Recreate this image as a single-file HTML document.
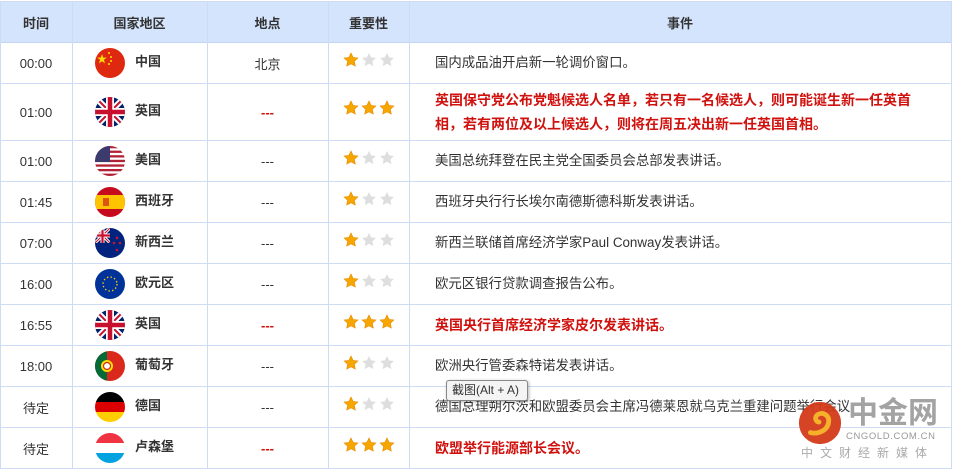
<!DOCTYPE html>
<html><head><meta charset="utf-8"><style>
*{margin:0;padding:0;box-sizing:border-box}
body{width:954px;height:469px;background:#fff;position:relative;overflow:hidden;font-family:"Liberation Sans","Noto Sans CJK SC",sans-serif;font-size:13px;color:#333}
.hd{position:absolute;left:0;top:1px;width:952px;height:42px;background:#d4e4fd;border-bottom:1px solid #c3d5f0}
.vl{position:absolute;top:1px;width:1px;height:468px;background:#cddcf3}
.hl{position:absolute;left:0;width:952px;height:1px;background:#cddcf3}
.c{position:absolute;display:flex;align-items:center;justify-content:center}
.th{font-weight:bold;color:#333}
.flag{position:absolute;left:95px;width:30px;height:30px;border-radius:50%;overflow:hidden}
.cn{position:absolute;left:135px;font-weight:bold;color:#333;line-height:16px}
.ev{position:absolute;left:435px;line-height:24px;color:#333;font-size:13.4px}
.red{color:#d0120f;font-weight:bold;font-size:14px}
.stars{position:absolute;left:343px}
.dash{color:#d0120f;font-weight:bold}
</style></head><body>
<div class="hd"></div>
<div class="vl" style="left:0"></div><div class="vl" style="left:72px"></div><div class="vl" style="left:207px"></div><div class="vl" style="left:328px"></div><div class="vl" style="left:409px"></div><div class="vl" style="left:951px"></div>
<div class="hl" style="top:1px"></div>
<div class="hl" style="top:83px"></div><div class="hl" style="top:140px"></div><div class="hl" style="top:181px"></div><div class="hl" style="top:222px"></div><div class="hl" style="top:263px"></div><div class="hl" style="top:304px"></div><div class="hl" style="top:345px"></div><div class="hl" style="top:386px"></div><div class="hl" style="top:427px"></div><div class="hl" style="top:468px"></div>

<div class="c th" style="left:0;width:72px;top:1px;height:42px">时间</div>
<div class="c th" style="left:72px;width:135px;top:1px;height:42px">国家地区</div>
<div class="c th" style="left:207px;width:121px;top:1px;height:42px">地点</div>
<div class="c th" style="left:328px;width:81px;top:1px;height:42px">重要性</div>
<div class="c th" style="left:409px;width:542px;top:1px;height:42px">事件</div>

<svg width="0" height="0" style="position:absolute"><defs>
<symbol id="sg" viewBox="0 0 16 16"><path d="M8 1l2.1 4.4 4.8.6-3.5 3.3.9 4.8L8 11.8 3.7 14.1l.9-4.8L1.1 6l4.8-.6z" fill="#f7a600" stroke="#e88a00" stroke-width=".6"/></symbol>
<symbol id="sw" viewBox="0 0 16 16"><path d="M8 1l2.1 4.4 4.8.6-3.5 3.3.9 4.8L8 11.8 3.7 14.1l.9-4.8L1.1 6l4.8-.6z" fill="#dedede"/></symbol>
<symbol id="uk" viewBox="0 0 30 30"><rect width="30" height="30" fill="#012169"/><path d="M0 0L30 30M30 0L0 30" stroke="#fff" stroke-width="6"/><path d="M0 0L30 30M30 0L0 30" stroke="#c8102e" stroke-width="2"/><path d="M15 0V30M0 15H30" stroke="#fff" stroke-width="8"/><path d="M15 0V30M0 15H30" stroke="#c8102e" stroke-width="4.5"/></symbol>
</defs></svg>

<div class="c" style="left:0;width:72px;top:43px;height:40px">00:00</div>
<svg class="flag" style="top:48px" viewBox="0 0 30 30"><rect width="30" height="30" fill="#de2910"/><path d="M7 6l1.2 3.6h3.7l-3 2.2 1.1 3.6L7 13.2l-3 2.2 1.1-3.6-3-2.2h3.7z" fill="#ffde00"/><circle cx="14" cy="5" r="1" fill="#ffde00"/><circle cx="16" cy="9" r="1" fill="#ffde00"/><circle cx="16" cy="13" r="1" fill="#ffde00"/><circle cx="14" cy="16" r="1" fill="#ffde00"/></svg>
<div class="cn" style="top:54px">中国</div>
<div class="c" style="left:207px;width:121px;top:43px;height:40px">北京</div>
<div class="stars" style="top:52px"><svg width="54" height="16"><use href="#sg" width="16" height="16"/><use href="#sw" x="18" width="16" height="16"/><use href="#sw" x="36" width="16" height="16"/></svg></div>
<div class="ev" style="top:51px">国内成品油开启新一轮调价窗口。</div>

<div class="c" style="left:0;width:72px;top:84px;height:56px">01:00</div>
<svg class="flag" style="top:97px"><use href="#uk"/></svg>
<div class="cn" style="top:103px">英国</div>
<div class="c dash" style="left:207px;width:121px;top:84px;height:56px">---</div>
<div class="stars" style="top:100px"><svg width="54" height="16"><use href="#sg" width="16" height="16"/><use href="#sg" x="18" width="16" height="16"/><use href="#sg" x="36" width="16" height="16"/></svg></div>
<div class="ev red" style="top:88px">英国保守党公布党魁候选人名单，若只有一名候选人，则可能诞生新一任英首<br>相，若有两位及以上候选人，则将在周五决出新一任英国首相。</div>

<div class="c" style="left:0;width:72px;top:141px;height:40px">01:00</div>
<svg class="flag" style="top:146px" viewBox="0 0 30 30"><rect width="30" height="30" fill="#fff"/><g fill="#b22234"><rect y="0" width="30" height="2.3"/><rect y="4.6" width="30" height="2.3"/><rect y="9.2" width="30" height="2.3"/><rect y="13.8" width="30" height="2.3"/><rect y="18.4" width="30" height="2.3"/><rect y="23" width="30" height="2.3"/><rect y="27.6" width="30" height="2.4"/></g><rect width="15" height="16" fill="#3c3b6e"/></svg>
<div class="cn" style="top:152px">美国</div>
<div class="c" style="left:207px;width:121px;top:141px;height:40px">---</div>
<div class="stars" style="top:150px"><svg width="54" height="16"><use href="#sg" width="16" height="16"/><use href="#sw" x="18" width="16" height="16"/><use href="#sw" x="36" width="16" height="16"/></svg></div>
<div class="ev" style="top:149px">美国总统拜登在民主党全国委员会总部发表讲话。</div>

<div class="c" style="left:0;width:72px;top:182px;height:40px">01:45</div>
<svg class="flag" style="top:187px" viewBox="0 0 30 30"><rect width="30" height="30" fill="#c60b1e"/><rect y="8" width="30" height="14" fill="#ffc400"/><rect x="8" y="11" width="6" height="8" fill="#c60b1e" opacity=".6"/></svg>
<div class="cn" style="top:193px">西班牙</div>
<div class="c" style="left:207px;width:121px;top:182px;height:40px">---</div>
<div class="stars" style="top:191px"><svg width="54" height="16"><use href="#sg" width="16" height="16"/><use href="#sw" x="18" width="16" height="16"/><use href="#sw" x="36" width="16" height="16"/></svg></div>
<div class="ev" style="top:190px">西班牙央行行长埃尔南德斯德科斯发表讲话。</div>

<div class="c" style="left:0;width:72px;top:223px;height:40px">07:00</div>
<svg class="flag" style="top:228px" viewBox="0 0 30 30"><rect width="30" height="30" fill="#00247d"/><svg width="15" height="15" viewBox="0 0 30 30"><use href="#uk"/></svg><g fill="#cc142b"><circle cx="22" cy="10" r="1.3"/><circle cx="25" cy="15" r="1.3"/><circle cx="19" cy="15" r="1.3"/><circle cx="22" cy="22" r="1.3"/></g></svg>
<div class="cn" style="top:234px">新西兰</div>
<div class="c" style="left:207px;width:121px;top:223px;height:40px">---</div>
<div class="stars" style="top:232px"><svg width="54" height="16"><use href="#sg" width="16" height="16"/><use href="#sw" x="18" width="16" height="16"/><use href="#sw" x="36" width="16" height="16"/></svg></div>
<div class="ev" style="top:231px">新西兰联储首席经济学家Paul Conway发表讲话。</div>

<div class="c" style="left:0;width:72px;top:264px;height:40px">16:00</div>
<svg class="flag" style="top:269px" viewBox="0 0 30 30"><rect width="30" height="30" fill="#003399"/><circle cx="15" cy="15" r="7" fill="none" stroke="#ffcc00" stroke-width="1.4" stroke-dasharray="1.4 2.3"/></svg>
<div class="cn" style="top:275px">欧元区</div>
<div class="c" style="left:207px;width:121px;top:264px;height:40px">---</div>
<div class="stars" style="top:273px"><svg width="54" height="16"><use href="#sg" width="16" height="16"/><use href="#sw" x="18" width="16" height="16"/><use href="#sw" x="36" width="16" height="16"/></svg></div>
<div class="ev" style="top:272px">欧元区银行贷款调查报告公布。</div>

<div class="c" style="left:0;width:72px;top:305px;height:40px">16:55</div>
<svg class="flag" style="top:310px"><use href="#uk"/></svg>
<div class="cn" style="top:316px">英国</div>
<div class="c dash" style="left:207px;width:121px;top:305px;height:40px">---</div>
<div class="stars" style="top:314px"><svg width="54" height="16"><use href="#sg" width="16" height="16"/><use href="#sg" x="18" width="16" height="16"/><use href="#sg" x="36" width="16" height="16"/></svg></div>
<div class="ev red" style="top:313px">英国央行首席经济学家皮尔发表讲话。</div>

<div class="c" style="left:0;width:72px;top:346px;height:40px">18:00</div>
<svg class="flag" style="top:351px" viewBox="0 0 30 30"><rect width="30" height="30" fill="#da291c"/><rect width="12" height="30" fill="#046a38"/><circle cx="12" cy="15" r="6" fill="#ffe000"/><circle cx="12" cy="15" r="3.5" fill="#fff" stroke="#da291c" stroke-width="1.2"/></svg>
<div class="cn" style="top:357px">葡萄牙</div>
<div class="c" style="left:207px;width:121px;top:346px;height:40px">---</div>
<div class="stars" style="top:355px"><svg width="54" height="16"><use href="#sg" width="16" height="16"/><use href="#sw" x="18" width="16" height="16"/><use href="#sw" x="36" width="16" height="16"/></svg></div>
<div class="ev" style="top:354px">欧洲央行管委森特诺发表讲话。</div>

<div class="c" style="left:0;width:72px;top:387px;height:40px">待定</div>
<svg class="flag" style="top:392px" viewBox="0 0 30 30"><rect width="30" height="10" fill="#000"/><rect y="10" width="30" height="10" fill="#dd0000"/><rect y="20" width="30" height="10" fill="#ffce00"/></svg>
<div class="cn" style="top:398px">德国</div>
<div class="c" style="left:207px;width:121px;top:387px;height:40px">---</div>
<div class="stars" style="top:396px"><svg width="54" height="16"><use href="#sg" width="16" height="16"/><use href="#sw" x="18" width="16" height="16"/><use href="#sw" x="36" width="16" height="16"/></svg></div>
<div class="ev" style="top:395px">德国总理朔尔茨和欧盟委员会主席冯德莱恩就乌克兰重建问题举行会议</div>

<div class="c" style="left:0;width:72px;top:428px;height:40px">待定</div>
<svg class="flag" style="top:433px" viewBox="0 0 30 30"><rect width="30" height="10" fill="#ef3340"/><rect y="10" width="30" height="10" fill="#fff"/><rect y="20" width="30" height="10" fill="#00a3e0"/></svg>
<div class="cn" style="top:439px">卢森堡</div>
<div class="c dash" style="left:207px;width:121px;top:428px;height:40px">---</div>
<div class="stars" style="top:437px"><svg width="54" height="16"><use href="#sg" width="16" height="16"/><use href="#sg" x="18" width="16" height="16"/><use href="#sg" x="36" width="16" height="16"/></svg></div>
<div class="ev red" style="top:436px">欧盟举行能源部长会议。</div>

<div style="position:absolute;left:446px;top:380px;width:82px;height:21px;border:1px solid #888;border-radius:3px;background:#f4f4f4;box-shadow:1px 1px 3px rgba(0,0,0,.3);font-size:12px;line-height:19px;padding-left:5px;color:#333">截图(Alt + A)</div>

<svg style="position:absolute;left:797px;top:400px" width="46" height="46" viewBox="0 0 48 48"><circle cx="24" cy="24" r="22" fill="#d43a1a" opacity=".95"/><path d="M14 34c8 2 18-2 19-11 1-7-6-11-11-8-4 2-3 8 1 8" fill="none" stroke="#f6b12a" stroke-width="5" stroke-linecap="round"/></svg>
<div style="position:absolute;left:848px;top:397px;font-size:30px;line-height:34px;font-weight:bold;color:#9a9a9a;opacity:.9">中金网</div>
<div style="position:absolute;left:846px;top:431px;font-size:9.5px;color:#999;letter-spacing:0.6px">CNGOLD.COM.CN</div>
<div style="position:absolute;left:801px;top:444px;font-size:12px;color:#aaa;letter-spacing:7px">中文财经新媒体</div>
</body></html>
